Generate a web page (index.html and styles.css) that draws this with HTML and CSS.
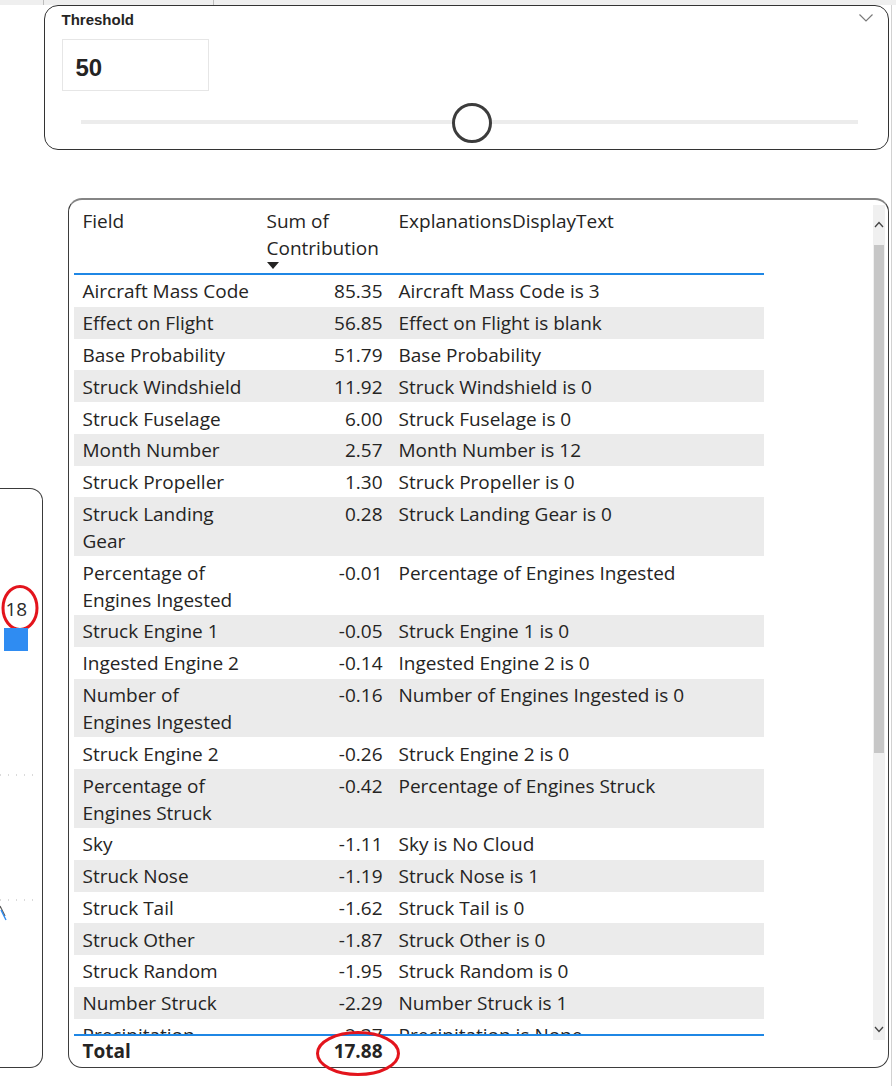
FILE: index.html
```html
<!DOCTYPE html>
<html lang="en">
<head>
<meta charset="utf-8">
<title>Threshold explanations</title>
<link rel="stylesheet" href="styles.css">
</head>
<body>
<div class="strip"></div>
<section class="threshold">
  <div class="th-head">
    <div class="th-title">Threshold</div>
    <svg class="chev" width="14" height="8" viewBox="0 0 14 8"><path d="M0.5 0.5 L7 7 L13.5 0.5" fill="none" stroke="#7a7a7a" stroke-width="1.2"/></svg>
  </div>
  <div class="th-input">50</div>
  <div class="slider">
    <div class="track"></div>
    <div class="thumb"></div>
  </div>
</section>
<div class="lower">
  <aside class="leftpanel">
    <svg class="lp-chart" width="43" height="580" viewBox="0 0 43 580">
      <text x="5.5" y="128" class="lp-label">18</text>
      <ellipse cx="20" cy="120" rx="17" ry="21.5" fill="none" stroke="#e3141c" stroke-width="3"/>
      <rect x="4" y="140" width="24" height="23" fill="#2f8cf2"/>
      <line x1="0" y1="287" x2="36" y2="287" stroke="#b5b5b5" stroke-width="1" stroke-dasharray="1 7"/>
      <line x1="0" y1="412" x2="36" y2="412" stroke="#b5b5b5" stroke-width="1" stroke-dasharray="1 7"/>
      <line x1="0" y1="418" x2="5" y2="428" stroke="#5a5a5a" stroke-width="1.2"/>
      <line x1="1" y1="422" x2="6" y2="432" stroke="#2f8cf2" stroke-width="1.4"/>
    </svg>
  </aside>
  <section class="tcard">
    <div class="tmain">
      <div class="thead">
        <div class="c1">Field</div>
        <div class="c2h">Sum of<br>Contribution<div class="sort"></div></div>
        <div class="c3">ExplanationsDisplayText</div>
      </div>
      <div class="tbody">
        <div class="row"><div class="c1">Aircraft Mass Code</div><div class="c2">85.35</div><div class="c3">Aircraft Mass Code is 3</div></div>
        <div class="row"><div class="c1">Effect on Flight</div><div class="c2">56.85</div><div class="c3">Effect on Flight is blank</div></div>
        <div class="row"><div class="c1">Base Probability</div><div class="c2">51.79</div><div class="c3">Base Probability</div></div>
        <div class="row"><div class="c1">Struck Windshield</div><div class="c2">11.92</div><div class="c3">Struck Windshield is 0</div></div>
        <div class="row"><div class="c1">Struck Fuselage</div><div class="c2">6.00</div><div class="c3">Struck Fuselage is 0</div></div>
        <div class="row"><div class="c1">Month Number</div><div class="c2">2.57</div><div class="c3">Month Number is 12</div></div>
        <div class="row"><div class="c1">Struck Propeller</div><div class="c2">1.30</div><div class="c3">Struck Propeller is 0</div></div>
        <div class="row"><div class="c1">Struck Landing<br>Gear</div><div class="c2">0.28</div><div class="c3">Struck Landing Gear is 0</div></div>
        <div class="row"><div class="c1">Percentage of<br>Engines Ingested</div><div class="c2">-0.01</div><div class="c3">Percentage of Engines Ingested</div></div>
        <div class="row"><div class="c1">Struck Engine 1</div><div class="c2">-0.05</div><div class="c3">Struck Engine 1 is 0</div></div>
        <div class="row"><div class="c1">Ingested Engine 2</div><div class="c2">-0.14</div><div class="c3">Ingested Engine 2 is 0</div></div>
        <div class="row"><div class="c1">Number of<br>Engines Ingested</div><div class="c2">-0.16</div><div class="c3">Number of Engines Ingested is 0</div></div>
        <div class="row"><div class="c1">Struck Engine 2</div><div class="c2">-0.26</div><div class="c3">Struck Engine 2 is 0</div></div>
        <div class="row"><div class="c1">Percentage of<br>Engines Struck</div><div class="c2">-0.42</div><div class="c3">Percentage of Engines Struck</div></div>
        <div class="row"><div class="c1">Sky</div><div class="c2">-1.11</div><div class="c3">Sky is No Cloud</div></div>
        <div class="row"><div class="c1">Struck Nose</div><div class="c2">-1.19</div><div class="c3">Struck Nose is 1</div></div>
        <div class="row"><div class="c1">Struck Tail</div><div class="c2">-1.62</div><div class="c3">Struck Tail is 0</div></div>
        <div class="row"><div class="c1">Struck Other</div><div class="c2">-1.87</div><div class="c3">Struck Other is 0</div></div>
        <div class="row"><div class="c1">Struck Random</div><div class="c2">-1.95</div><div class="c3">Struck Random is 0</div></div>
        <div class="row"><div class="c1">Number Struck</div><div class="c2">-2.29</div><div class="c3">Number Struck is 1</div></div>
        <div class="row"><div class="c1">Precipitation</div><div class="c2">-2.37</div><div class="c3">Precipitation is None</div></div>
      </div>
      <div class="tfoot">
        <div class="c1">Total</div><div class="c2">17.88</div><div class="c3"></div>
      </div>
    </div>
    <div class="sbar">
      <div class="sb-up"><svg width="10" height="7" viewBox="0 0 10 7"><path d="M1 6 L5 1.5 L9 6" fill="none" stroke="#444" stroke-width="1.3"/></svg></div>
      <div class="sb-thumb"></div>
      <div class="sb-down"><svg width="10" height="7" viewBox="0 0 10 7"><path d="M1 1 L5 5.5 L9 1" fill="none" stroke="#444" stroke-width="1.3"/></svg></div>
    </div>
    <svg class="mark" width="86" height="47" viewBox="0 0 86 47"><ellipse cx="43" cy="23.5" rx="40.5" ry="21" fill="none" stroke="#e3141c" stroke-width="3"/></svg>
  </section>
</div>
</body>
</html>
```
FILE: styles.css
```css
* { box-sizing: border-box; }
html, body { margin: 0; padding: 0; }
body {
  width: 896px;
  height: 1086px;
  overflow: hidden;
  background: #ffffff linear-gradient(to right, transparent 891px, #d2d2d2 891px, #d2d2d2 892px, transparent 892px);
  font-family: "Open Sans", "Noto Sans", sans-serif;
  color: #252423;
}
.strip {
  height: 5px;
  background:
    linear-gradient(to right, transparent 43px, #bdbdbd 43px, #bdbdbd 44px, transparent 44px),
    linear-gradient(to right, transparent 213px, #bdbdbd 213px, #bdbdbd 214px, transparent 214px),
    #efefef;
}
.threshold {
  margin-left: 44px;
  width: 845px;
  height: 145px;
  border: 1.5px solid #333;
  border-radius: 14px;
  padding: 3.5px 15px 0 16.5px;
  background: #fff;
}
.th-head {
  display: flex;
  justify-content: space-between;
  align-items: center;
  height: 19px;
}
.th-title {
  font: 700 15px/19px "Liberation Sans", Arial, sans-serif;
  color: #252423;
}
.chev { margin-top: -3px; }
.th-input {
  margin-top: 10px;
  width: 147px;
  height: 52px;
  border: 1px solid #e6e6e6;
  display: flex;
  align-items: center;
  padding: 6px 0 0 13px;
  font: 700 24px/1 "Liberation Sans", Arial, sans-serif;
  color: #252423;
}
.slider {
  position: relative;
  margin: 12px 15.5px 0 19px;
  height: 40px;
}
.track {
  position: absolute;
  left: 0;
  right: 0;
  top: 17px;
  height: 4px;
  background: #ececec;
}
.thumb {
  position: absolute;
  left: 50.4%;
  top: 0;
  width: 40px;
  height: 40px;
  margin-left: -20px;
  border: 3px solid #3c3c3c;
  border-radius: 50%;
  background: #fff;
}
.lower {
  display: flex;
  align-items: flex-start;
  margin-top: 48px;
}
.leftpanel {
  width: 43px;
  height: 580px;
  margin-top: 290px;
  border: 1.5px solid #3a3a3a;
  border-left: none;
  border-radius: 0 13px 13px 0;
  flex: none;
}
.lp-chart { display: block; overflow: visible; margin-top: -1.5px; }
.lp-label {
  font-family: "Open Sans", sans-serif;
  font-size: 19px;
  font-weight: 500;
  fill: #2b2b2b;
}
.tcard {
  position: relative;
  margin-left: 25px;
  width: 821px;
  height: 870px;
  border: 1.5px solid #3d3d3d;
  border-top: 2px solid #858585;
  border-radius: 14px;
  display: flex;
  padding: 0 3.5px 0 4.5px;
  flex: none;
}
.tmain {
  width: 690px;
  display: flex;
  flex-direction: column;
  font-size: 19px;
  line-height: 27px;
}
.thead, .row, .tfoot {
  display: grid;
  grid-template-columns: 185px 132px 373px;
}
.thead {
  height: 75px;
  padding-top: 7.5px;
  border-bottom: 2px solid #1f87e5;
}
.c1, .c2, .c3, .c2h { white-space: nowrap; }
.c1 { padding-left: 9px; padding-right: 4px; }
.c2 { padding-right: 8px; text-align: right; }
.c2h { padding-left: 8px; }
.c3 { padding-left: 8px; }
.sort {
  width: 0;
  height: 0;
  border-left: 6px solid transparent;
  border-right: 6px solid transparent;
  border-top: 7px solid #252423;
  margin-top: 0;
}
.tbody {
  flex: 1;
  overflow: hidden;
}
.row > div { padding-top: 3.4px; padding-bottom: 1.4px; }
.row:nth-child(even) { background: #ebebeb; }
.tfoot {
  height: 33.5px;
  border-top: 2px solid #1f87e5;
  padding-top: 2.5px;
  font-weight: 700;
}
.sbar {
  margin-left: auto;
  margin-top: 5px;
  width: 12px;
  height: 835px;
  background: #f0f0f0;
  display: flex;
  flex-direction: column;
  align-items: center;
}
.sb-up {
  height: 40px;
  padding-top: 16px;
  display: flex;
  justify-content: center;
}
.sb-up svg, .sb-down svg { display: block; }
.sb-thumb {
  width: 10px;
  height: 508px;
  background: #c7c7c7;
}
.sb-down {
  margin-top: auto;
  padding-bottom: 7px;
}
.mark {
  position: absolute;
  left: 245.5px;
  top: 830px;
  overflow: visible;
}
```
